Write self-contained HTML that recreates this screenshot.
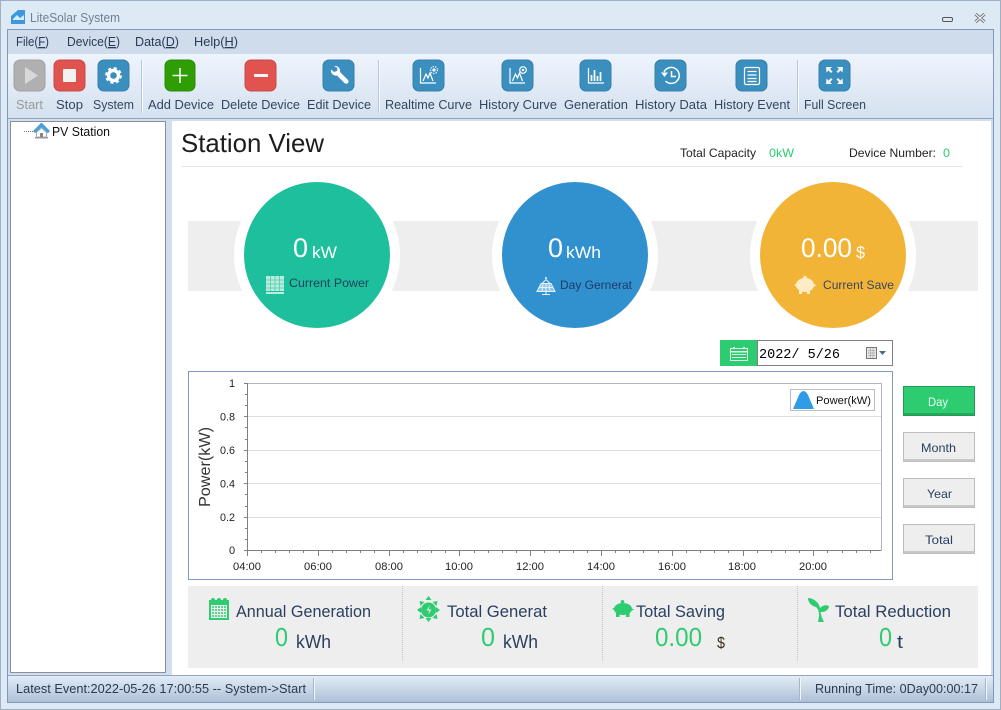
<!DOCTYPE html>
<html><head><meta charset="utf-8"><title>LiteSolar System</title>
<style>
html,body{margin:0;padding:0;width:1001px;height:710px;overflow:hidden;background:#dde9f5}
svg{display:block}
text{font-family:"Liberation Sans",sans-serif;font-size:13px;fill:#2b3a55}
.tb{font-size:13px;fill:#35455f}
.ax{font-size:11px;fill:#222}
.g{fill:#2ecc71}
.w{fill:#fff}
.b{font-size:17px;fill:#2b4060}
</style></head><body>
<svg width="1001" height="710" viewBox="0 0 1001 710" xmlns="http://www.w3.org/2000/svg">
<defs>
<linearGradient id="tg" x1="0" y1="0" x2="0" y2="1"><stop offset="0" stop-color="#eef4fd"/><stop offset="1" stop-color="#d5e1ef"/></linearGradient>
<linearGradient id="sg" x1="0" y1="0" x2="0" y2="1"><stop offset="0" stop-color="#e2ecf7"/><stop offset="1" stop-color="#aec0d6"/></linearGradient>
</defs>
<!-- window -->
<rect x="0.5" y="0.5" width="1000" height="709" fill="#dde9f5" stroke="#9fb0c4"/>
<rect x="7.5" y="29.5" width="986" height="673" fill="#d0deee" stroke="#7f99b8"/>
<rect x="8" y="30" width="985" height="24" fill="#cfdcec"/>
<rect x="8" y="54" width="985" height="64" fill="url(#tg)"/>
<rect x="8" y="118" width="985" height="1" fill="#8ea6c2"/>
<!-- title bar -->
<path d="M11 24V16L18 10h7v14z" fill="#3f97dd"/><path d="M13 19l4-4 3 3 4-3v5H13z" fill="#d5ecfb"/>
<text x="30" y="22" textLength="90" lengthAdjust="spacingAndGlyphs" style="fill:#6d8094">LiteSolar System</text>
<rect x="942.500" y="17.500" width="10" height="4" rx="1.500" fill="none" stroke="#555"/>
<path d="M975.500 14l9 8M984.500 14l-9 8" stroke="#666" stroke-width="3" fill="none"/>
<path d="M975.500 14l9 8M984.500 14l-9 8" stroke="#e8eff7" stroke-width="1.400" fill="none"/>
<!-- menu -->
<text x="16" y="46" textLength="33" lengthAdjust="spacingAndGlyphs">File(<tspan text-decoration="underline">F</tspan>)</text>
<text x="67" y="46" textLength="53" lengthAdjust="spacingAndGlyphs">Device(<tspan text-decoration="underline">E</tspan>)</text>
<text x="135" y="46" textLength="44" lengthAdjust="spacingAndGlyphs">Data(<tspan text-decoration="underline">D</tspan>)</text>
<text x="194" y="46" textLength="44" lengthAdjust="spacingAndGlyphs">Help(<tspan text-decoration="underline">H</tspan>)</text>
<!-- toolbar separators -->
<path d="M141.500 60V113M378.500 60V113M797.500 60V113" stroke="#b7c6d8"/>
<path d="M142.500 60V113M379.500 60V113M798.500 60V113" stroke="#f6faff"/>
<!-- toolbar buttons -->
<rect x="14" y="60" width="31" height="31" rx="6" fill="#b0b0b0" stroke="#a0a0a0"/>
<path d="M25 67L38 75.500 25 84z" fill="#d8d8d8"/>
<rect x="54" y="60" width="31" height="31" rx="6" fill="#e0534f" stroke="#c84a47"/>
<rect x="63" y="69" width="13" height="13" rx="1" fill="#f2f2f2"/>
<rect x="98" y="60" width="31" height="31" rx="6" fill="#3b8fbf" stroke="#347fab"/>
<circle cx="113.500" cy="75.500" r="5" fill="none" stroke="#fff" stroke-width="3.400"/>
<circle cx="113.500" cy="75.500" r="7.200" fill="none" stroke="#fff" stroke-width="2.400" stroke-dasharray="3 2.650"/>
<rect x="165" y="60" width="30" height="31" rx="6" fill="#2f9e05" stroke="#298b05"/>
<path d="M180 68V83M172.500 75.500H187.500" stroke="#f4f4f4" stroke-width="1.600"/>
<rect x="245" y="60" width="31" height="31" rx="6" fill="#e0534f" stroke="#c84a47"/>
<rect x="254" y="74" width="14" height="3" fill="#f4f4f4"/>
<rect x="323" y="60" width="31" height="31" rx="6" fill="#3b8fbf" stroke="#347fab"/>
<path d="M334 66a5 5 0 0 1 6 6L348 80a1.500 1.500 0 0 1-3.500 3l-7.500-7.500a5 5 0 0 1-6-6l3 2.500 3-1 .5-3z" fill="#fff"/>
<!-- blue buttons row 2 -->
<g fill="#3b8fbf" stroke="#347fab">
<rect x="413" y="60" width="31" height="31" rx="6"/>
<rect x="502" y="60" width="31" height="31" rx="6"/>
<rect x="580" y="60" width="31" height="31" rx="6"/>
<rect x="655" y="60" width="31" height="31" rx="6"/>
<rect x="736" y="60" width="31" height="31" rx="6"/>
<rect x="819" y="60" width="31" height="31" rx="6"/>
</g>
<g fill="none" stroke="#fff" stroke-width="1.200">
<path d="M420.500 68V83H436"/><path d="M423 81l3-7 2 4 2-5 3 8"/>
<circle cx="434" cy="70" r="3.500" stroke-dasharray="1.300 1.200"/><circle cx="434" cy="70" r="1" />
<path d="M510 68V83H525"/><path d="M512.500 81l3-7 2 4 2-5 3 8"/>
<circle cx="523" cy="70" r="3.300"/><circle cx="523" cy="70" r=".6"/>
<path d="M588.500 68V83H604"/><path d="M591.500 81V75M594.500 81V70M597.500 81V76M600.500 81V72" stroke-width="1.700"/>
<path d="M664 72a8 8 0 1 1 1.500 9" stroke-width="1.500"/><path d="M671.500 71V76.500H676" stroke-width="1.500"/>
<rect x="744.500" y="67.500" width="15" height="17" rx="1.500"/>
<path d="M747.500 71.500H756.500M747.500 75H756.500M747.500 78.500H756.500M747.500 81.500H756.500"/>
</g>
<path d="M661 72.500h7l-3.500 4.500z" fill="#fff"/>
<g fill="#fff" opacity=".92">
<path d="M826 67h6l-2 2 2.500 2.500-1.500 1.500-2.500-2.500-2 2zM843 67h-6l2 2-2.500 2.500 1.500 1.500 2.500-2.500 2 2zM826 84h6l-2-2 2.500-2.500-1.500-1.500-2.500 2.500-2-2zM843 84h-6l2-2-2.500-2.500 1.500-1.500 2.500 2.500 2-2z"/>
</g>
<!-- toolbar labels -->
<text class="tb" x="16" y="109" textLength="27" lengthAdjust="spacingAndGlyphs" style="fill:#9a9a9a">Start</text>
<text class="tb" x="56" y="109" textLength="27" lengthAdjust="spacingAndGlyphs">Stop</text>
<text class="tb" x="93" y="109" textLength="41" lengthAdjust="spacingAndGlyphs">System</text>
<text class="tb" x="148" y="109" textLength="66" lengthAdjust="spacingAndGlyphs">Add Device</text>
<text class="tb" x="221" y="109" textLength="79" lengthAdjust="spacingAndGlyphs">Delete Device</text>
<text class="tb" x="307" y="109" textLength="64" lengthAdjust="spacingAndGlyphs">Edit Device</text>
<text class="tb" x="385" y="109" textLength="87" lengthAdjust="spacingAndGlyphs">Realtime Curve</text>
<text class="tb" x="479" y="109" textLength="78" lengthAdjust="spacingAndGlyphs">History Curve</text>
<text class="tb" x="564" y="109" textLength="64" lengthAdjust="spacingAndGlyphs">Generation</text>
<text class="tb" x="635" y="109" textLength="72" lengthAdjust="spacingAndGlyphs">History Data</text>
<text class="tb" x="714" y="109" textLength="76" lengthAdjust="spacingAndGlyphs">History Event</text>
<text class="tb" x="804" y="109" textLength="62" lengthAdjust="spacingAndGlyphs">Full Screen</text>
<!-- tree -->
<rect x="10.500" y="121.500" width="155" height="551" fill="#fff" stroke="#8a8f98"/>
<path d="M24 131.500H34" stroke="#777" stroke-dasharray="1 1"/>
<path d="M41.500 123L33.500 131l1.700 1.700 6.300-6 6.300 6L49.500 131z" fill="#4da3e0" stroke="#3b8fd0" stroke-width=".6"/>
<path d="M36.500 132.500L41.500 128l5 4.500V137h-10z" fill="#fff" stroke="#9a9a9a" stroke-width=".8"/>
<rect x="40" y="133" width="3" height="4" fill="#888"/>
<rect x="35" y="137" width="13" height="1.500" fill="#999"/>
<text x="52" y="136" textLength="58" lengthAdjust="spacingAndGlyphs" style="fill:#111">PV Station</text>
<!-- main white -->
<rect x="172" y="121" width="819" height="554" fill="#fff"/>
<text x="181" y="152" textLength="143" lengthAdjust="spacingAndGlyphs" style="font-size:26px;fill:#1d1d1d">Station View</text>
<text x="680" y="157" textLength="76" lengthAdjust="spacingAndGlyphs" style="font-size:12px;fill:#222">Total Capacity</text>
<text x="769" y="157" textLength="25" lengthAdjust="spacingAndGlyphs" class="g" style="font-size:12px">0kW</text>
<text x="849" y="157" textLength="87" lengthAdjust="spacingAndGlyphs" style="font-size:12px;fill:#222">Device Number:</text>
<text x="943" y="157" textLength="7" lengthAdjust="spacingAndGlyphs" class="g" style="font-size:12px">0</text>
<rect x="181" y="166" width="782" height="1" fill="#e6e6e6"/>
<!-- band & circles -->
<rect x="188" y="221" width="790" height="70" fill="#eeeeee"/>
<circle cx="317" cy="255" r="83" fill="#fff"/><circle cx="575" cy="255" r="83" fill="#fff"/><circle cx="833" cy="255" r="83" fill="#fff"/>
<circle cx="317" cy="255" r="73" fill="#1dbf9c"/>
<circle cx="575" cy="255" r="73" fill="#3191cf"/>
<circle cx="833" cy="255" r="73" fill="#f2b436"/>
<text x="293" y="257" textLength="15" lengthAdjust="spacingAndGlyphs" class="w" style="font-size:27px">0</text>
<text x="312" y="258" textLength="25" lengthAdjust="spacingAndGlyphs" class="w" style="font-size:17px">kW</text>
<rect x="266" y="276" width="18" height="15" fill="#b9ecdc"/>
<path d="M266 280H284M266 284H284M266 288H284M270.500 276V291M275 276V291M279.500 276V291" stroke="#4dcdb0" stroke-width=".8"/>
<rect x="266" y="292" width="18" height="2" fill="#b9ecdc"/>
<text x="289" y="287" textLength="80" lengthAdjust="spacingAndGlyphs" style="font-size:12px;fill:#22405f">Current Power</text>
<text x="548" y="257" textLength="15" lengthAdjust="spacingAndGlyphs" class="w" style="font-size:27px">0</text>
<text x="566" y="258" textLength="35" lengthAdjust="spacingAndGlyphs" class="w" style="font-size:17px">kWh</text>
<path d="M541 283.500L537 291.500H555L551 283.500Z" fill="#8cc3ea" stroke="#e6f3ff" stroke-width="1"/>
<path d="M539 287.500H553M543 283.500L542 291.500M546 283.500V291.500M549 283.500L550 291.500M546 279.500L542 283.500M546 279.500L550 283.500M546 291.500V294M542 294.500H550" stroke="#e6f3ff" stroke-width="1" fill="none"/>
<circle cx="546" cy="278" r="1" fill="#e6f3ff"/>
<text x="560" y="289" textLength="72" lengthAdjust="spacingAndGlyphs" style="font-size:12px;fill:#1e3c66">Day Gernerat</text>
<text x="801" y="257" textLength="51" lengthAdjust="spacingAndGlyphs" class="w" style="font-size:27px">0.00</text>
<text x="856" y="258" textLength="9" lengthAdjust="spacingAndGlyphs" class="w" style="font-size:17px">$</text>
<ellipse cx="805" cy="285" rx="9" ry="7" fill="#fdecc6"/>
<path d="M794 285l4-2v5zM814 284l2.500 1.500-3 1zM799 289h3v5h-3zM807 289h3v5h-3z" fill="#fdecc6"/>
<circle cx="805" cy="277.500" r="1.800" fill="#fdecc6"/>
<text x="823" y="289" textLength="71" lengthAdjust="spacingAndGlyphs" style="font-size:12px;fill:#3a4660">Current Save</text>
<!-- date -->
<rect x="720" y="340" width="38" height="26" fill="#2ecc71"/>
<rect x="730.500" y="348.500" width="17" height="12" fill="none" stroke="#dff5e8"/>
<path d="M730 351h18v1.500H730zM732 354h14v1h-14zM732 357h14v1h-14zM733 347h2v2h-2zM743 347h2v2h-2z" fill="#dff5e8"/>
<rect x="757.500" y="340.500" width="135" height="25" fill="#fff" stroke="#808080"/>
<text x="759" y="358" style="font-family:'Liberation Mono',monospace;font-size:13.500px;fill:#000">2022/ 5/26</text>
<rect x="866.500" y="347.500" width="10" height="11" fill="#e4e4e4" stroke="#777"/>
<path d="M868 350.500h7M868 353h7M868 355.500h7M870.500 348v10M873 348v10" stroke="#aaa" stroke-width=".7"/>
<path d="M879 351h7l-3.500 4z" fill="#4a6a8a"/>
<!-- chart -->
<rect x="188.500" y="371.500" width="704" height="208" fill="#fff" stroke="#7f9cc0"/>
<path d="M247 416.500H881M247 450.500H881M247 483.500H881M247 517.500H881" stroke="#dedede"/>
<path d="M247 383.500H881.500V550" fill="none" stroke="#b4b4b4"/>
<path d="M247.500 383V550.500H881.500" fill="none" stroke="#808080"/>
<path d="M244 383.500H247M244 416.500H247M244 450.500H247M244 483.500H247M244 517.500H247M244 550.500H247M245 394.500H247M245 405.500H247M245 427.500H247M245 439.500H247M245 461.500H247M245 472.500H247M245 494.500H247M245 506.500H247M245 528.500H247M245 539.500H247" stroke="#808080"/>
<path d="M247.500 550V556M318.500 550V556M389.500 550V556M459.500 550V556M530.500 550V556M601.500 550V556M672.500 550V556M743.500 550V556M813.500 550V556M261.500 550V553M275.500 550V553M289.500 550V553M303.500 550V553M332.500 550V553M346.500 550V553M360.500 550V553M374.500 550V553M403.500 550V553M417.500 550V553M431.500 550V553M445.500 550V553M474.500 550V553M488.500 550V553M502.500 550V553M516.500 550V553M544.500 550V553M559.500 550V553M573.500 550V553M587.500 550V553M615.500 550V553M629.500 550V553M643.500 550V553M658.500 550V553M686.500 550V553M700.500 550V553M714.500 550V553M728.500 550V553M757.500 550V553M771.500 550V553M785.500 550V553M799.500 550V553M827.500 550V553M842.500 550V553M856.500 550V553M870.500 550V553" stroke="#808080"/>
<text class="ax" x="229" y="387">1</text>
<text class="ax" x="220" y="420.500" textLength="15" lengthAdjust="spacingAndGlyphs">0.8</text>
<text class="ax" x="220" y="454" textLength="15" lengthAdjust="spacingAndGlyphs">0.6</text>
<text class="ax" x="220" y="487.500" textLength="15" lengthAdjust="spacingAndGlyphs">0.4</text>
<text class="ax" x="220" y="521" textLength="15" lengthAdjust="spacingAndGlyphs">0.2</text>
<text class="ax" x="229" y="554">0</text>
<text class="ax" x="233" y="570" textLength="28" lengthAdjust="spacingAndGlyphs">04:00</text>
<text class="ax" x="304" y="570" textLength="28" lengthAdjust="spacingAndGlyphs">06:00</text>
<text class="ax" x="375" y="570" textLength="28" lengthAdjust="spacingAndGlyphs">08:00</text>
<text class="ax" x="445" y="570" textLength="28" lengthAdjust="spacingAndGlyphs">10:00</text>
<text class="ax" x="516" y="570" textLength="28" lengthAdjust="spacingAndGlyphs">12:00</text>
<text class="ax" x="587" y="570" textLength="28" lengthAdjust="spacingAndGlyphs">14:00</text>
<text class="ax" x="658" y="570" textLength="28" lengthAdjust="spacingAndGlyphs">16:00</text>
<text class="ax" x="728" y="570" textLength="28" lengthAdjust="spacingAndGlyphs">18:00</text>
<text class="ax" x="799" y="570" textLength="28" lengthAdjust="spacingAndGlyphs">20:00</text>
<text transform="translate(210 507) rotate(-90)" textLength="80" lengthAdjust="spacingAndGlyphs" style="font-size:16px;fill:#333">Power(kW)</text>
<rect x="790.500" y="389.500" width="84" height="21" fill="#fff" stroke="#bdbdbd"/>
<path d="M793 409L799 395Q803.500 387 808 395L814 409z" fill="#2f9ce6"/>
<text x="816" y="404" textLength="55" lengthAdjust="spacingAndGlyphs" style="font-size:11px;fill:#111">Power(kW)</text>
<!-- range buttons -->
<rect x="903.500" y="386.500" width="71" height="29" fill="#2ecc71" stroke="#1f9d55"/>
<rect x="904" y="413" width="70" height="2" fill="#25a85c"/>
<text x="928" y="406" textLength="20" lengthAdjust="spacingAndGlyphs" style="font-size:12px;fill:#f0fff5">Day</text>
<g fill="#eeeeee" stroke="#bdbdbd">
<rect x="903.500" y="432.500" width="71" height="29"/>
<rect x="903.500" y="478.500" width="71" height="29"/>
<rect x="903.500" y="524.500" width="71" height="29"/>
</g>
<g fill="#c8c8c8"><rect x="904" y="459" width="70" height="2"/><rect x="904" y="505" width="70" height="2"/><rect x="904" y="551" width="70" height="2"/></g>
<text x="921" y="452" textLength="35" lengthAdjust="spacingAndGlyphs" style="font-size:12px;fill:#2b4060">Month</text>
<text x="927" y="498" textLength="25" lengthAdjust="spacingAndGlyphs" style="font-size:12px;fill:#2b4060">Year</text>
<text x="925" y="544" textLength="28" lengthAdjust="spacingAndGlyphs" style="font-size:12px;fill:#2b4060">Total</text>
<!-- bottom stats -->
<rect x="188" y="586" width="790" height="82" fill="#eeeeee"/>
<path d="M402.500 586V661M602.500 586V661M797.500 586V661" stroke="#c4c4c4" stroke-dasharray="1 1"/>
<rect x="209" y="600" width="20" height="20" fill="#2ecc71"/>
<rect x="211" y="605" width="16" height="13" fill="#eeeeee"/>
<circle cx="213" cy="600" r="2" fill="#2ecc71"/><circle cx="219" cy="600" r="2" fill="#2ecc71"/><circle cx="225" cy="600" r="2" fill="#2ecc71"/>
<path d="M212 607h14M212 610h14M212 613h14M212 616h14" stroke="#2ecc71" stroke-width="1.500" stroke-dasharray="2 1"/>
<text class="b" x="236" y="617" textLength="135" lengthAdjust="spacingAndGlyphs">Annual Generation</text>
<text class="g" x="275" y="646" textLength="13" lengthAdjust="spacingAndGlyphs" style="font-size:26px">0</text>
<text class="b" x="296" y="648" textLength="35" lengthAdjust="spacingAndGlyphs" style="font-size:18px">kWh</text>
<circle cx="428.500" cy="610" r="7.500" fill="#2ecc71"/>
<path d="M428.500 596l3 4h-6zM428.500 622l3-4h-6zM417 610l4-3v6zM440 610l-4-3v6zM419.500 601l5 1-4 4zM437.500 601l-5 1 4 4zM419.500 619l5-1-4-4zM437.500 619l-5-1 4-4z" fill="#2ecc71"/>
<path d="M430 605l-3.500 5.500h3l-1.500 4.500 3.500-5.500h-3z" fill="#eeeeee"/>
<text class="b" x="447" y="617" textLength="100" lengthAdjust="spacingAndGlyphs">Total Generat</text>
<text class="g" x="481" y="646" textLength="14" lengthAdjust="spacingAndGlyphs" style="font-size:26px">0</text>
<text class="b" x="503" y="648" textLength="35" lengthAdjust="spacingAndGlyphs" style="font-size:18px">kWh</text>
<ellipse cx="623" cy="609" rx="9" ry="6" fill="#2ecc71"/>
<path d="M612 609l4-2v4zM631 608l3 1.500-3 1.500zM616 613h3.500v4H616zM626 613h3.500v4H626z" fill="#2ecc71"/>
<circle cx="622.500" cy="601.800" r="1.800" fill="#2ecc71"/>
<text class="b" x="636" y="617" textLength="89" lengthAdjust="spacingAndGlyphs">Total Saving</text>
<text class="g" x="655" y="646" textLength="47" lengthAdjust="spacingAndGlyphs" style="font-size:26px">0.00</text>
<text x="717" y="648" textLength="8" lengthAdjust="spacingAndGlyphs" style="font-size:16px;fill:#3a3020">$</text>
<path d="M818 622C820 614 819 610 816 607 811 606 808 602 808 598 813 598 819 602 820 608 824 604 829 605 829 607 827 612 823 612 820.500 612 821 616 823 620 824 622z" fill="#2ecc71"/>
<text class="b" x="835" y="617" textLength="116" lengthAdjust="spacingAndGlyphs">Total Reduction</text>
<text class="g" x="879" y="646" textLength="13" lengthAdjust="spacingAndGlyphs" style="font-size:26px">0</text>
<text class="b" x="897" y="648" textLength="6" lengthAdjust="spacingAndGlyphs" style="font-size:18px">t</text>
<!-- status bar -->
<rect x="8" y="675" width="985" height="1" fill="#8ea6c2"/>
<rect x="8" y="676" width="985" height="26" fill="url(#sg)"/>
<rect x="7" y="702" width="987" height="1" fill="#7f99b8"/>
<path d="M314.500 678V700M800.500 678V700M986.500 678V700" stroke="#f2f6fb"/>
<path d="M313.500 678V700M799.500 678V700M985.500 678V700" stroke="#a5b6ca"/>
<text x="16" y="693" textLength="290" lengthAdjust="spacingAndGlyphs" style="fill:#2b3a55">Latest Event:2022-05-26 17:00:55 -- System-&gt;Start</text>
<text x="815" y="693" textLength="163" lengthAdjust="spacingAndGlyphs" style="fill:#2b3a55">Running Time: 0Day00:00:17</text>
</svg>
</body></html>
